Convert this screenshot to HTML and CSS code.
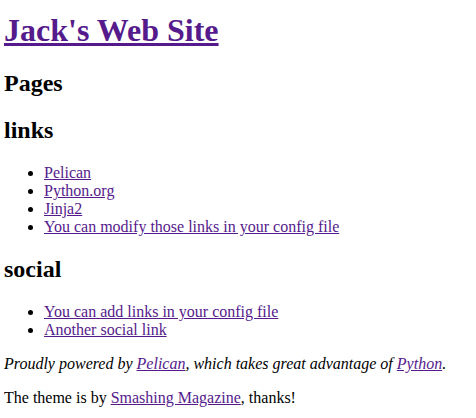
FILE: index.html
```html
<!DOCTYPE html>
<html>
<head>
<meta charset="utf-8">
<link rel="stylesheet" href="styles.css">
</head>
<body class="page">
<header class="banner">
<h1 class="site-title"><a class="link" href="#">Jack's Web Site</a></h1>
</header>
<h2 class="section-title">Pages</h2>
<h2 class="section-title">links</h2>
<ul class="list">
<li><a class="link" href="#">Pelican</a></li>
<li><a class="link" href="#">Python.org</a></li>
<li><a class="link" href="#">Jinja2</a></li>
<li><a class="link" href="#">You can modify those links in your config file</a></li>
</ul>
<h2 class="section-title">social</h2>
<ul class="list">
<li><a class="link" href="#">You can add links in your config file</a></li>
<li><a class="link" href="#">Another social link</a></li>
</ul>
<footer class="footer">
<address class="powered">Proudly powered by <a class="link" href="#">Pelican</a>, which takes great advantage of <a class="link" href="#">Python</a>.</address>
<p class="credit">The theme is by <a class="link" href="#">Smashing Magazine</a>, thanks!</p>
</footer>
</body>
</html>
```
FILE: styles.css
```css
.page {
  margin: 12px 4px 8px 4px;
  font-family: "Liberation Serif", "Times New Roman", serif;
  font-size: 16px;
  color: #000;
  background: #fff;
}
.link {
  color: #551a8b;
  text-decoration: underline;
}
.site-title {
  font-size: 32px;
  font-weight: bold;
  margin: 0 0 21.44px;
}
.section-title {
  font-size: 24px;
  font-weight: bold;
  margin: 19.92px 0;
}
.list {
  margin: 16px 0;
  padding-left: 40px;
}
.powered {
  font-style: italic;
  display: block;
}
.credit {
  margin: 16px 0;
}
```
